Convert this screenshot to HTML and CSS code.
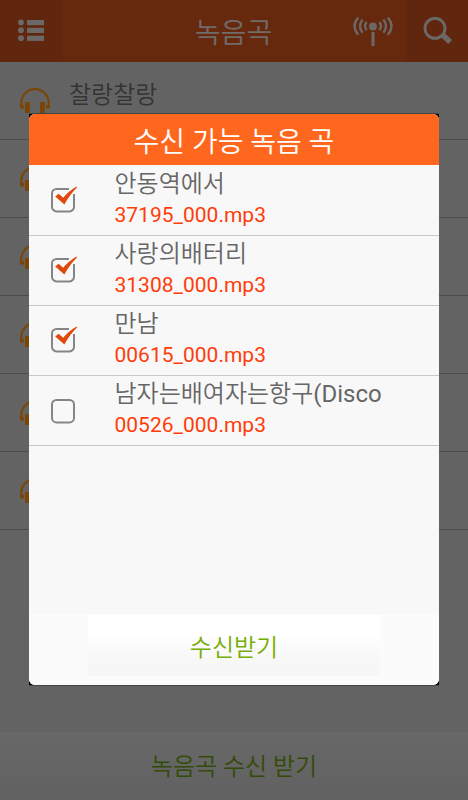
FILE: index.html
```html
<!DOCTYPE html>
<html lang="ko">
<head>
    <meta charset="UTF-8">
    <meta name="viewport" content="width=device-width, initial-scale=1.0">
    <title>녹음곡</title>
    <link rel="stylesheet" href="styles.css">
</head>
<body>
<svg class="defs" width="0" height="0">
    <symbol id="headphones" viewBox="0 0 32 28">
        <path d="M2.2 21V16A13.6 13.6 0 0 1 29.8 16V21" fill="none" stroke="currentColor" stroke-width="2.2"/>
        <path d="M1.2 18H5V21.4H1.2zM27 18H30.8V21.4H27z" fill="currentColor"/>
        <rect x="6" y="15" width="5" height="11" fill="currentColor"/>
        <rect x="21" y="15" width="5" height="11" fill="currentColor"/>
    </symbol>
    <symbol id="box" viewBox="0 0 28 28">
        <rect x="2" y="4" width="22" height="22.4" rx="4.5" fill="none" stroke="#858585" stroke-width="2"/>
    </symbol>
    <symbol id="check" viewBox="0 0 28 28">
        <path d="M19 4H6.5A4.5 4.5 0 0 0 2 8.5V21.9A4.5 4.5 0 0 0 6.5 26.4H19.5A4.5 4.5 0 0 0 24 21.9V9" fill="none" stroke="#858585" stroke-width="2"/>
        <path d="M5.2 11.6L8.6 8.8L13.2 12.8Q18.5 6 26.6 1.4L27 2.4Q19.8 9.3 14.4 19.4z" fill="#e0490b"/>
    </symbol>
</svg>

<div class="screen">
    <div class="header">
        <div class="header-button">
            <svg width="26" height="24" viewBox="0 0 26 24" fill="#6b6867">
                <circle cx="3" cy="3.4" r="2.9"/><rect x="9" y="1" width="17" height="5.2"/>
                <circle cx="3" cy="11.2" r="2.9"/><rect x="9" y="8.8" width="17" height="5.2"/>
                <circle cx="3" cy="19.2" r="2.9"/><rect x="9" y="16.7" width="17" height="5.2"/>
            </svg>
        </div>
        <h1 class="header-title">녹음곡</h1>
        <svg class="antenna" width="40" height="30" viewBox="0 0 40 30">
            <circle cx="20" cy="10.5" r="3.9" fill="#6b6867"/>
            <path d="M20 16V30" stroke="#6b6867" stroke-width="3"/>
            <g fill="none" stroke="#6b6867" stroke-width="2.3">
                <path d="M13.6 6Q10.4 10 13.6 14.2M9.6 3.5Q4.4 10 9.6 16.7M5.2 1.5Q-2.2 10 5.2 18.8"/>
                <path d="M26.4 6Q29.6 10 26.4 14.2M30.4 3.5Q35.6 10 30.4 16.7M34.8 1.5Q42.2 10 34.8 18.8"/>
            </g>
        </svg>
        <div class="header-button search">
            <svg width="30" height="28" viewBox="0 0 30 28" fill="none" stroke="#6b6867">
                <circle cx="12" cy="11.3" r="10" stroke-width="2.9"/>
                <path d="M19.2 17.5L27.2 25" stroke-width="5.4"/>
            </svg>
        </div>
    </div>
    <div class="list">
        <div class="song"><svg class="phones"><use href="#headphones"/></svg><span>찰랑찰랑</span></div>
        <div class="song"><svg class="phones"><use href="#headphones"/></svg></div>
        <div class="song"><svg class="phones"><use href="#headphones"/></svg></div>
        <div class="song"><svg class="phones"><use href="#headphones"/></svg></div>
        <div class="song"><svg class="phones"><use href="#headphones"/></svg></div>
        <div class="song"><svg class="phones"><use href="#headphones"/></svg></div>
    </div>
    <div class="footer">녹음곡 수신 받기</div>
</div>

<div class="modal">
    <div class="dialog">
        <h2 class="dialog-title">수신 가능 녹음 곡</h2>
        <div class="items">
            <div class="item">
                <svg class="checkbox"><use href="#check"/></svg>
                <div>
                    <div class="name">안동역에서</div>
                    <div class="file">37195_000.mp3</div>
                </div>
            </div>
            <div class="item">
                <svg class="checkbox"><use href="#check"/></svg>
                <div>
                    <div class="name">사랑의배터리</div>
                    <div class="file">31308_000.mp3</div>
                </div>
            </div>
            <div class="item">
                <svg class="checkbox"><use href="#check"/></svg>
                <div>
                    <div class="name">만남</div>
                    <div class="file">00615_000.mp3</div>
                </div>
            </div>
            <div class="item">
                <svg class="checkbox"><use href="#box"/></svg>
                <div>
                    <div class="name">남자는배여자는항구<span class="latin">(Disco</span></div>
                    <div class="file">00526_000.mp3</div>
                </div>
            </div>
        </div>
        <div class="dialog-footer">
            <button class="receive">수신받기</button>
        </div>
    </div>
</div>
</body>
</html>
```

FILE: styles.css
```css
* {
    box-sizing: border-box;
}

body {
    margin: 0;
    font-family: Roboto, "Noto Sans CJK KR", sans-serif;
    font-weight: 350;
    overflow: hidden;
}

h1, h2 {
    margin: 0;
    font-weight: 350;
}

.defs {
    position: absolute;
}

/* dimmed page under the dialog */
.screen {
    display: flex;
    flex-direction: column;
    width: 468px;
    height: 800px;
    background: #636363;
}

.header {
    display: flex;
    align-items: center;
    height: 62px;
    background: #66290d;
}

.header-button {
    display: flex;
    align-items: center;
    width: 63px;
    height: 62px;
    padding-left: 18px;
    background: #60260e;
}

.header-title {
    flex: 1;
    padding: 5px 0 0 51px;
    text-align: center;
    font-size: 28px;
    line-height: 62px;
    color: #716b69;
}

.antenna {
    margin-right: 12px;
}

.list {
    flex: 1;
}

.song {
    display: flex;
    height: 78px;
    padding-left: 19px;
    border-bottom: 1px solid #4c4c4c;
    font-size: 24px;
    line-height: 66px;
    color: #343434;
}

.phones {
    width: 32px;
    height: 28px;
    margin: 25px 18px 0 0;
    color: #7a4607;
}

.footer {
    height: 68px;
    background: linear-gradient(#686868, #616161);
    text-align: center;
    font-size: 24px;
    line-height: 70px;
    color: #324b08;
}

.modal {
    position: absolute;
    top: 113px;
    left: 29px;
    width: 410px;
    height: 573px;
    border: solid #454545;
    border-width: 1px 0;
    background: #000;
}

.dialog {
    display: flex;
    flex-direction: column;
    height: 571px;
    border-radius: 6px;
    background: #f8f8f8;
    overflow: hidden;
}

.dialog-title {
    height: 51px;
    background: #ff671f;
    text-align: center;
    font-size: 28px;
    line-height: 58px;
    color: #fff;
}

.items {
    padding-top: 0.5px;
}

.item {
    display: flex;
    height: 70.2px;
    padding-left: 21px;
    border-bottom: 1px solid #c8c8c8;
}

.checkbox {
    width: 28px;
    height: 28px;
    margin: 19.5px 36.5px 0 0;
}

.name {
    font-size: 24px;
    line-height: 36px;
    color: #666;
}

.latin {
    font-weight: 400;
}

.file {
    font-size: 21px;
    font-weight: 400;
    line-height: 27px;
    color: #ff3c0a;
}

.dialog-footer {
    height: 71px;
    margin-top: auto;
    padding: 1px 59px;
    background: #fbfbfb;
}

.receive {
    width: 292px;
    height: 61px;
    border: none;
    background: linear-gradient(#fff 30%, #f7f7f7 75%);
    font-family: inherit;
    font-size: 24px;
    font-weight: 350;
    color: #76ad06;
}
```
